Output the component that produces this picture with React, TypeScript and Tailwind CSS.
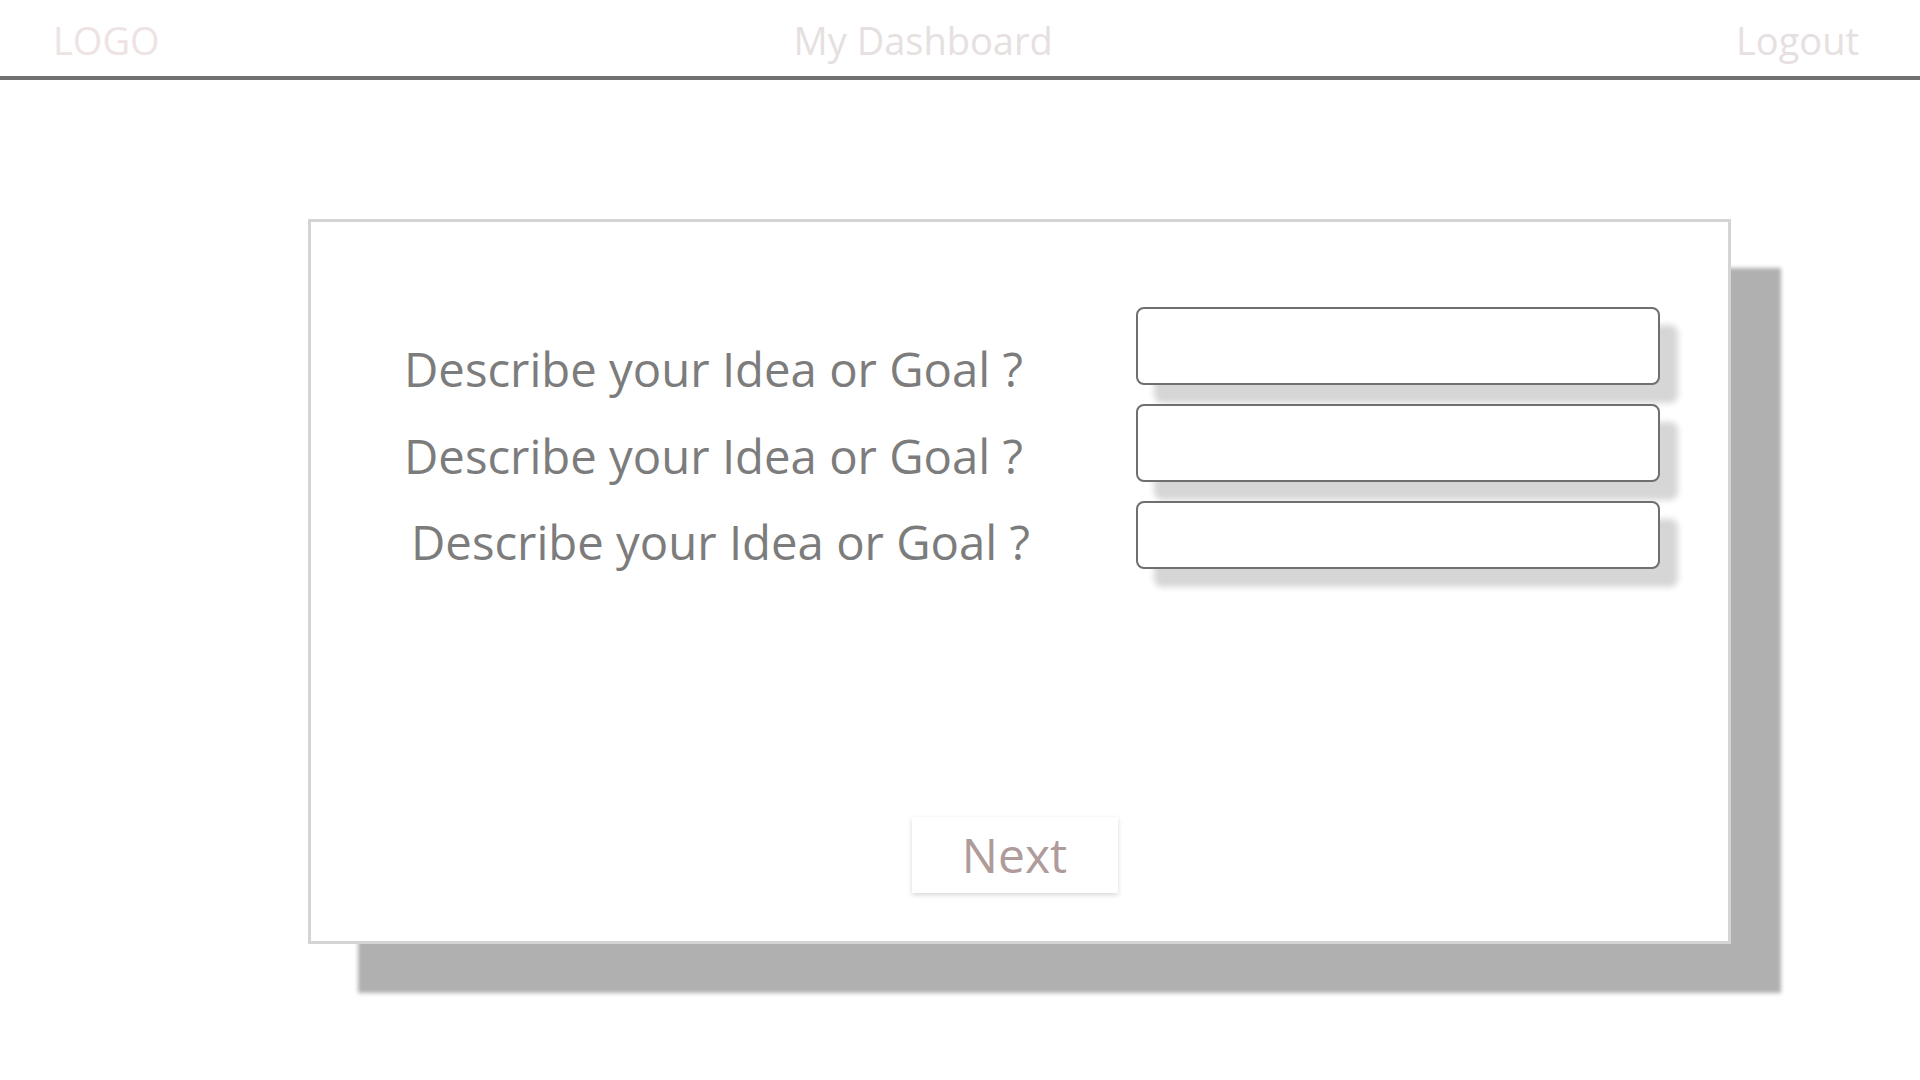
const labels = [
  "Describe your Idea or Goal ?",
  "Describe your Idea or Goal ?",
  "Describe your Idea or Goal ?",
];

export default function App() {
  return (
    <div className="min-h-screen w-full bg-white font-['Open_Sans',sans-serif]">
      {/* top bar */}
      <header className="flex h-[80px] items-start border-b-4 border-[#717171] pl-[53px] pr-[61px] pt-[21px]">
        <span className="text-[38px] leading-none text-[#eee3e3]">LOGO</span>
        <span className="ml-[634px] text-[38px] leading-none text-[#e6e0e0]">
          My Dashboard
        </span>
        <span className="ml-auto text-[38px] leading-none text-[#e6e0e0]">
          Logout
        </span>
      </header>

      <main className="pl-[308px] pt-[139px]">
        <div className="flex h-[725px] w-[1423px] flex-col border-[3px] border-[#d4d4d4] bg-white shadow-[50px_49px_4px_#b0b0b0]">
          <div className="flex">
            <div className="flex flex-col pl-[93px] pt-[104px]">
              {labels.map((label, i) => (
                <span
                  key={i}
                  className={
                    "text-[47.3px] leading-[86.5px] text-[#7c7c7c] whitespace-nowrap" +
                    (i === 2 ? " pl-[7px]" : "")
                  }
                >
                  {label}
                </span>
              ))}
            </div>
            <div className="ml-auto mr-[68px] flex w-[524px] flex-col gap-[19px] pt-[85px]">
              <input className="h-[78px] w-full rounded-[8px] border-2 border-[#6f6f6f] bg-white shadow-[18px_18px_6px_#d6d6d6] outline-none" />
              <input className="h-[78px] w-full rounded-[8px] border-2 border-[#6f6f6f] bg-white shadow-[18px_18px_6px_#d6d6d6] outline-none" />
              <input className="h-[68px] w-full rounded-[8px] border-2 border-[#6f6f6f] bg-white shadow-[18px_18px_6px_#d6d6d6] outline-none" />
            </div>
          </div>

          <div className="mt-auto flex justify-center pb-[48px] pr-[10px]">
            <button className="flex h-[76px] w-[206px] items-center justify-center bg-white text-[48px] leading-none text-[#b09b9b] shadow-[0_2px_5px_rgba(0,0,0,0.16)]">
              Next
            </button>
          </div>
        </div>
      </main>
    </div>
  );
}
